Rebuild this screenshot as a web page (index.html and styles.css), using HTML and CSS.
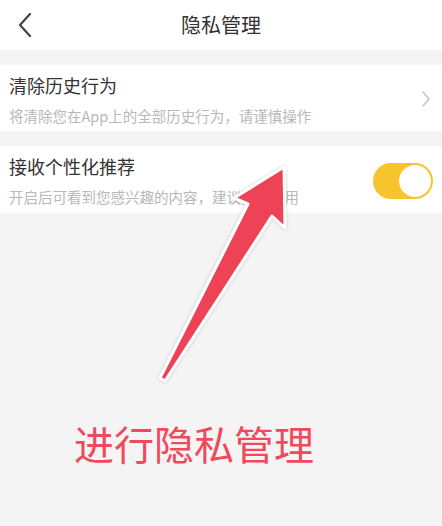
FILE: index.html
```html
<!DOCTYPE html>
<html lang="zh-CN">
<head>
<meta charset="utf-8">
<title>隐私管理</title>
<link rel="stylesheet" href="styles.css">
</head>
<body>
<div class="page">
  <header class="header">
    <svg class="back" width="16" height="24" viewBox="0 0 16 24"><path d="M13 1 L3 12 L13 23" fill="none" stroke="#444" stroke-width="2.2" stroke-linecap="round" stroke-linejoin="round"/></svg>
    <div class="title">隐私管理</div>
  </header>
  <div class="list">
    <div class="row">
      <div class="texts">
        <div class="row-title">清除历史行为</div>
        <div class="row-sub">将清除您在App上的全部历史行为，请谨慎操作</div>
      </div>
      <svg class="chev" width="10" height="16" viewBox="0 0 10 16"><path d="M2 1 L8 8 L2 15" fill="none" stroke="#c4c4c4" stroke-width="1.5" stroke-linecap="round" stroke-linejoin="round"/></svg>
    </div>
    <div class="row">
      <div class="texts">
        <div class="row-title">接收个性化推荐</div>
        <div class="row-sub">开启后可看到您感兴趣的内容，建议开启使用</div>
      </div>
      <div class="toggle"><div class="knob"></div></div>
    </div>
  </div>
  <div class="caption">进行隐私管理</div>
  <svg class="arrow" width="442" height="526" viewBox="0 0 442 526">
    <defs>
      <filter id="sh" x="-20%" y="-20%" width="140%" height="140%">
        <feDropShadow dx="0" dy="0" stdDeviation="1.5" flood-color="#000" flood-opacity="0.25"/>
      </filter>
    </defs>
    <polygon points="160,378 248,204 234,198 284,167 285,228 272,216 165,381" fill="#ee4257" stroke="#fff" stroke-width="3" stroke-linejoin="round" filter="url(#sh)"/>
  </svg>
</div>
</body>
</html>
```
FILE: styles.css
```css
* { box-sizing: border-box; }
html, body { margin: 0; padding: 0; }
body {
  background: #f4f4f4;
  font-family: "Noto Sans CJK SC", "Noto Sans", sans-serif;
  width: 442px;
  height: 526px;
  overflow: hidden;
}
.page { position: relative; width: 442px; height: 526px; }
.header {
  height: 50px;
  background: #fff;
  display: flex;
  align-items: center;
  justify-content: center;
  position: relative;
}
.back { position: absolute; left: 17px; top: 13px; }
.title { font-size: 20px; color: #333; line-height: 24px; }
.list { padding-top: 15px; display: flex; flex-direction: column; gap: 15px; }
.row {
  background: #fff;
  height: 66px;
  display: flex;
  align-items: center;
  padding: 0 9px;
}
.row + .row { height: 67px; }
.texts { flex: 1; display: flex; flex-direction: column; padding-top: 2px; }
.row-title { font-size: 18px; color: #333; line-height: 24px; }
.row-sub { font-size: 14.5px; color: #b8b8b8; line-height: 20px; margin-top: 9px; }
.chev { margin-right: 2px; margin-top: 2px; }
.toggle {
  width: 60px;
  height: 36px;
  border-radius: 18px;
  background: #f7c42b;
  position: relative;
  margin-right: 0;
  margin-top: 3px;
}
.knob {
  position: absolute;
  right: 2px;
  top: 2px;
  width: 32px;
  height: 32px;
  border-radius: 50%;
  background: #fff;
}
.caption {
  margin-top: 210px;
  padding-left: 74px;
  font-size: 40px;
  line-height: 40px;
  color: #ef4a5c;
}
.arrow { position: absolute; left: 0; top: 0; }
```
